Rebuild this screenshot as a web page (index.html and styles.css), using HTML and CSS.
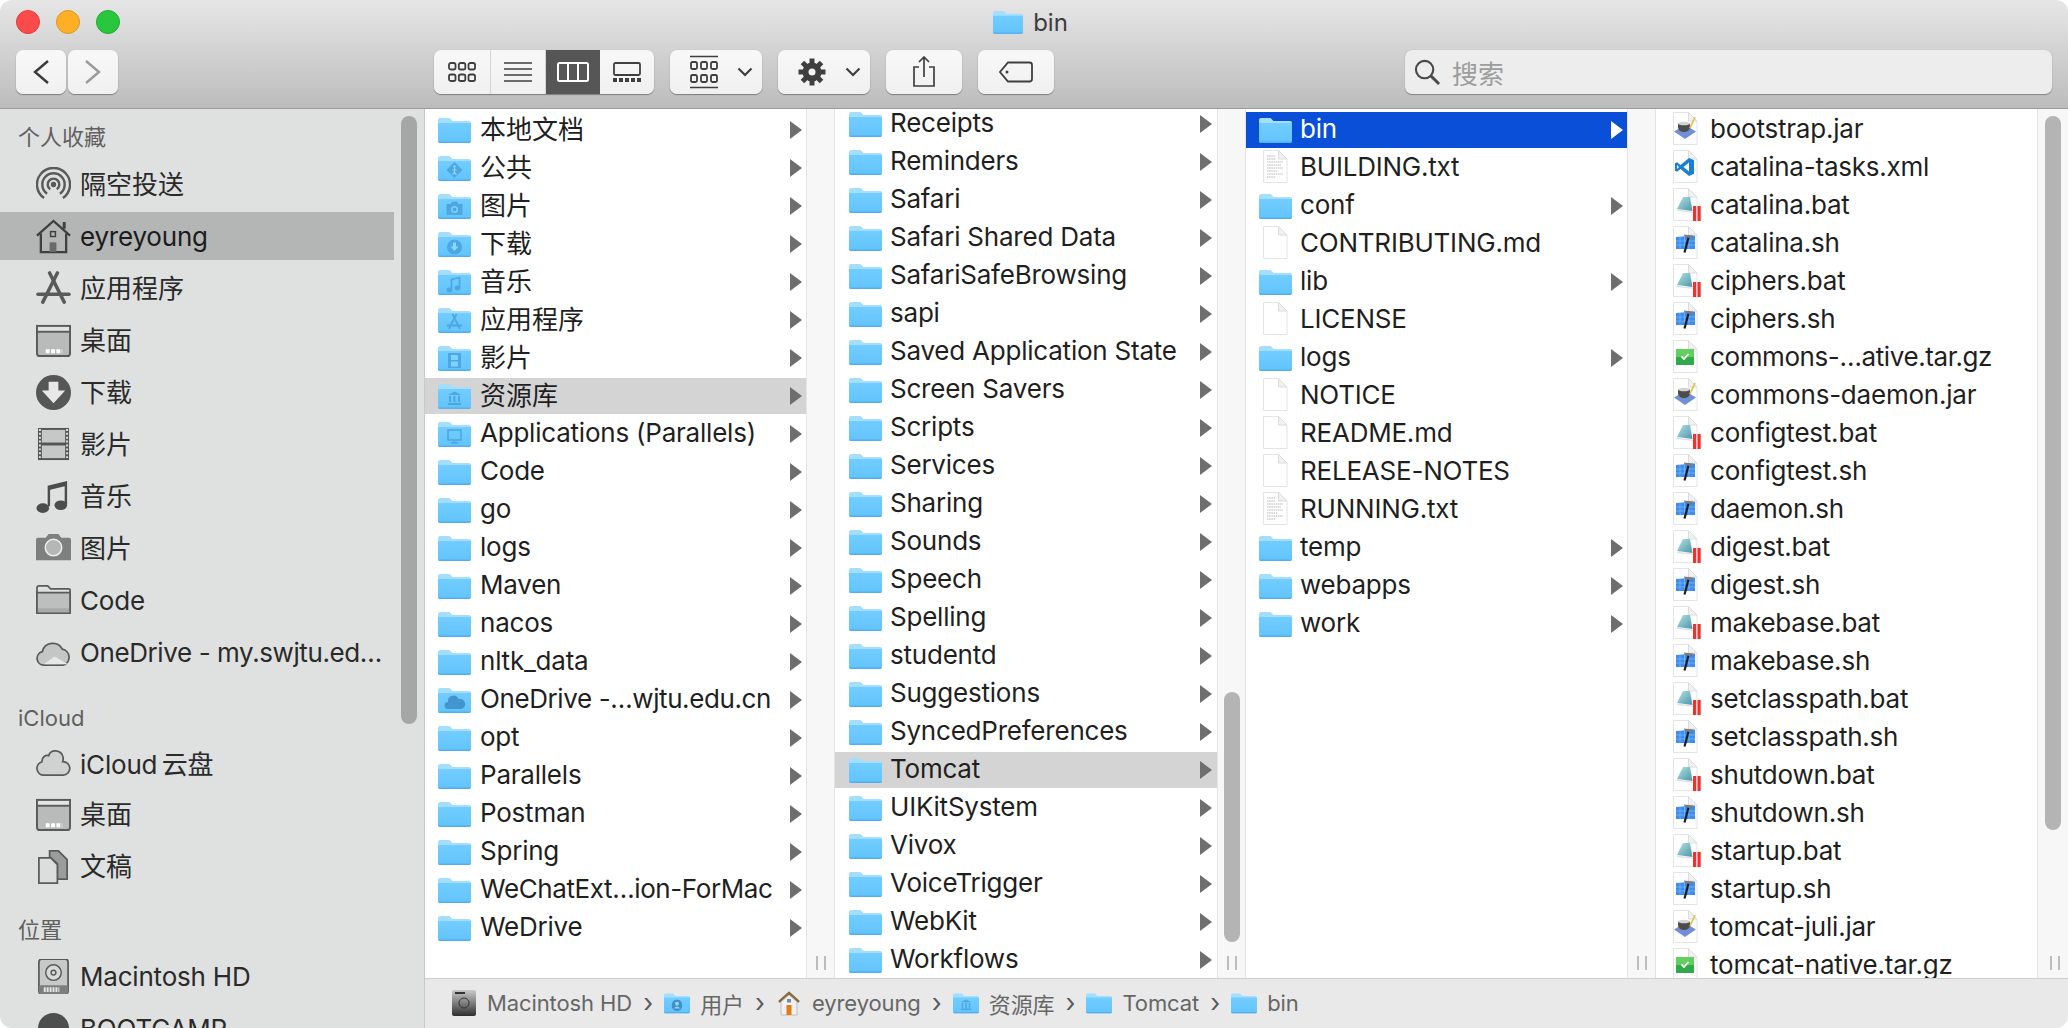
FILE: index.html
```html
<!DOCTYPE html>
<html lang="zh-CN">
<head>
    <meta charset="UTF-8">
    <title>bin</title>
    <link rel="stylesheet" href="styles.css">
</head>
<body>
    <!-- shared icon parts -->
    <svg class="defs" xmlns="http://www.w3.org/2000/svg">
        <defs>
            <linearGradient id="folderFront" x1="0" y1="0" x2="0" y2="1">
                <stop offset="0" stop-color="#72cdff"/>
                <stop offset="1" stop-color="#62c3fc"/>
            </linearGradient>
            <linearGradient id="hdMetal" x1="0" y1="0" x2="0" y2="1">
                <stop offset="0" stop-color="#c9c9c9"/>
                <stop offset="0.6" stop-color="#6f6f6f"/>
                <stop offset="1" stop-color="#2e2e2e"/>
            </linearGradient>
            <linearGradient id="padTeal" x1="0" y1="0" x2="1" y2="1">
                <stop offset="0" stop-color="#b4e2e4"/>
                <stop offset="1" stop-color="#4a96aa"/>
            </linearGradient>
            <g id="folder">
                <path d="M0 3a2 2 0 0 1 2-2h9.500l3 3H31a2 2 0 0 1 2 2v6H0z" fill="#a3deff"/>
                <path d="M0 6h33v18a2 2 0 0 1-2 2H2a2 2 0 0 1-2-2z" fill="url(#folderFront)"/>
                <path d="M0 24.500h33a2 2 0 0 1-2 1.500H2a2 2 0 0 1-2-1.500z" fill="#52afe9"/>
            </g>
            <g id="gPublic" fill="#4ca7e3">
                <path d="M16.500 7l8 8-8 8-8-8z"/>
                <circle cx="16.500" cy="11.500" r="1.200" fill="#8fd6ff"/>
                <path d="M16.500 13v4l-2 3M16.500 17l2 3M14.500 15h4" fill="none" stroke="#8fd6ff" stroke-width="1.200"/>
            </g>
            <g id="gPics" fill="#4ca7e3">
                <path d="M8.500 11h4l1.500-2.500h5L20.500 11h4v11h-16z"/>
                <circle cx="16.500" cy="16.500" r="3.500" fill="#7fd2ff"/>
                <circle cx="16.500" cy="16.500" r="2" fill="#4ca7e3"/>
            </g>
            <g id="gDown">
                <circle cx="16.500" cy="16" r="7.500" fill="#4ca7e3"/>
                <path d="M15 11.500h3v4h2.500l-4 4.500-4-4.500H15z" fill="#8fd6ff"/>
            </g>
            <g id="gMusic" fill="none" stroke="#4ca7e3" stroke-width="1.700">
                <path d="M13.500 21V10.500l8-2V19"/>
                <ellipse cx="11.500" cy="21" rx="2" ry="1.600" fill="#4ca7e3"/>
                <ellipse cx="19.500" cy="19" rx="2" ry="1.600" fill="#4ca7e3"/>
            </g>
            <g id="gApps" fill="none" stroke="#4ca7e3" stroke-width="1.800">
                <path d="M14.500 7l7.500 15M18.500 7L11 22M9 18.500h15"/>
            </g>
            <g id="gMovie" fill="#4ca7e3">
                <path d="M10 8h13v15H10z"/>
                <path d="M13 10h7v5h-7zM13 16.500h7v5h-7z" fill="#7fd2ff"/>
            </g>
            <g id="gLib" fill="#4ca7e3">
                <path d="M16.500 8.500l7 3.500h-14z"/>
                <path d="M11 13h2v6h-2zM15.500 13h2v6h-2zM20 13h2v6h-2zM10 20h13v2H10z"/>
            </g>
            <g id="gParallels" fill="none" stroke="#4ca7e3" stroke-width="1.600">
                <rect x="10" y="9" width="13" height="10"/>
                <path d="M13 22h7M16.500 19v3"/>
            </g>
            <g id="gCloud" fill="#4395cf">
                <path d="M10 22a3.500 3.500 0 0 1 0-7 5.500 5.500 0 0 1 10.500-3 4.500 4.500 0 0 1 3 10z"/>
            </g>
            <g id="gUser" fill="#3f8fc8">
                <rect x="10" y="9" width="13" height="14" rx="6"/>
                <circle cx="16.500" cy="14" r="2.500" fill="#8fd6ff"/>
                <path d="M13 20c.5-3 6.500-3 7 0z" fill="#8fd6ff"/>
            </g>
            <g id="doc">
                <path d="M4.500.5h15l8.500 8.500v23.500H4.500z" fill="#fff" stroke="#e4e4e4"/>
                <path d="M19.500.5V9H28z" fill="#f1f1f1" stroke="#dcdcdc"/>
            </g>
            <g id="docTxt">
                <use href="#doc"/>
                <path d="M8 6h9M8 9h9M8 12h16M8 15h14M8 18h16M8 21h11M8 24h16M8 27h9" stroke="#b4b4b4" stroke-dasharray="1.500 .7"/>
            </g>
            <g id="fJar">
                <use href="#doc"/>
                <path d="M16 13l11 6.500L16 27 5 19.500z" fill="#6f8fd6"/>
                <path d="M9 11h12v4c0 3-3 5-6 5s-6-2-6-5z" fill="#4c4c4c"/>
                <ellipse cx="15" cy="11.500" rx="6" ry="1.800" fill="#d4d4d4"/>
                <path d="M26 5l-5 11" stroke="#e4c24a" stroke-width="1.800"/>
            </g>
            <g id="fXml">
                <use href="#doc"/>
                <path d="M20 8l5 2.300v13.400l-5 2.300-8.500-7-3.500 2.700-2-1v-7.400l2-1 3.500 2.700z" fill="#1b7fd4"/>
                <path d="M20 12.500L14.500 17l5.500 4.500zM8 15v4l2-2z" fill="#fff"/>
            </g>
            <g id="fBat">
                <use href="#doc"/>
                <path d="M8 21.500l15.500 2 .5 1.500-16-2z" fill="#dfe3e4"/>
                <path d="M14 9h7l2.500 14L8 21z" fill="url(#padTeal)"/>
                <path d="M24 18h3.200v15H24zM28.500 18h3.200v15h-3.200z" fill="#f5302c"/>
            </g>
            <g id="fSh">
                <use href="#doc"/>
                <path d="M7 11l19-1.500V23H7z" fill="#3b8df0"/>
                <path d="M11 11v12M15.500 10.500V23M20 10v13M7 15h19M7 19h19" stroke="#8cc0fa" stroke-width=".6"/>
                <path d="M15.500 26.500l4-15" stroke="#1c1c1c" stroke-width="2.200"/>
                <path d="M15 8.500l9 1-.5 3-8-2z" fill="#7c7c7c"/>
            </g>
            <g id="fGz">
                <use href="#doc"/>
                <rect x="7" y="9" width="18" height="8" fill="#62d05f"/>
                <rect x="7" y="17" width="18" height="8" fill="#30a94a"/>
                <path d="M12.500 16.500l2.500 2.500 4.500-5" fill="none" stroke="#fff" stroke-width="1.800"/>
            </g>
        </defs>
    </svg>

    <div class="window">
        <header class="toolbar">
            <div class="title-row">
                <div class="lights">
                    <span class="light red"></span>
                    <span class="light yellow"></span>
                    <span class="light green"></span>
                </div>
                <div class="title">
                    <svg class="title-ico" viewBox="0 0 33 26"><use href="#folder"/></svg>
                    <span>bin</span>
                </div>
            </div>
            <div class="tool-row">
                <div class="nav-buttons">
                    <button class="btn nav-btn"><svg viewBox="0 0 18 28"><path d="M16 3L3 14l13 11" fill="none" stroke="#3a3a3a" stroke-width="2.400"/></svg></button>
                    <button class="btn nav-btn"><svg viewBox="0 0 18 28"><path d="M2 3l13 11L2 25" fill="none" stroke="#9a9a9a" stroke-width="2.400"/></svg></button>
                </div>
                <div class="view-group">
                    <button class="btn view-btn">
                        <svg width="28" height="20" viewBox="0 0 28 20" fill="none" stroke="#3f3f3f" stroke-width="1.800"><rect x="1" y="1" width="6.500" height="6.500" rx="1.800"/><rect x="10.800" y="1" width="6.500" height="6.500" rx="1.800"/><rect x="20.500" y="1" width="6.500" height="6.500" rx="1.800"/><rect x="1" y="12.500" width="6.500" height="6.500" rx="1.800"/><rect x="10.800" y="12.500" width="6.500" height="6.500" rx="1.800"/><rect x="20.500" y="12.500" width="6.500" height="6.500" rx="1.800"/></svg>
                    </button>
                    <button class="btn view-btn">
                        <svg width="28" height="20" viewBox="0 0 28 20" fill="none" stroke="#3f3f3f" stroke-width="1.700"><path d="M0 1h28M0 7h28M0 13h28M0 19h28"/></svg>
                    </button>
                    <button class="btn view-btn on">
                        <svg width="32" height="20" viewBox="0 0 32 20" fill="none" stroke="#fff" stroke-width="2"><rect x="1" y="1" width="30" height="18" rx="1.500"/><path d="M11 1v18M21 1v18"/></svg>
                    </button>
                    <button class="btn view-btn">
                        <svg width="28" height="20" viewBox="0 0 28 20" fill="none" stroke="#3f3f3f" stroke-width="1.800"><rect x="1" y="1" width="26" height="12" rx="1.500"/><path d="M0 18h28" stroke-width="4" stroke-dasharray="4 2"/></svg>
                    </button>
                </div>
                <button class="btn group-btn">
                    <svg class="group-ico" viewBox="0 0 28 34" fill="none" stroke="#3f3f3f" stroke-width="1.800"><path d="M0 1.500h28M0 32.500h28" stroke-width="1.600"/><rect x="1" y="7" width="6" height="7" rx="1.500"/><rect x="11" y="7" width="6" height="7" rx="1.500"/><rect x="21" y="7" width="6" height="7" rx="1.500"/><rect x="1" y="20" width="6" height="7" rx="1.500"/><rect x="11" y="20" width="6" height="7" rx="1.500"/><rect x="21" y="20" width="6" height="7" rx="1.500"/></svg>
                    <svg class="caret" viewBox="0 0 16 10"><path d="M1.500 1.500L8 8l6.500-6.500" fill="none" stroke="#3f3f3f" stroke-width="2.200"/></svg>
                </button>
                <button class="btn gear-btn">
                    <svg class="gear-ico" viewBox="0 0 28 28"><g fill="#3f3f3f"><path fill-rule="evenodd" d="M14 4.500a9.500 9.500 0 1 0 0 19 9.500 9.500 0 0 0 0-19zm0 6a3.500 3.500 0 1 1 0 7 3.500 3.500 0 0 1 0-7z"/><rect x="11.500" y="0.500" width="5" height="6"/><rect x="11.500" y="21.500" width="5" height="6"/><rect x="0.500" y="11.500" width="6" height="5"/><rect x="21.500" y="11.500" width="6" height="5"/><rect x="11.500" y="0.500" width="5" height="6" transform="rotate(45 14 14)"/><rect x="11.500" y="21.500" width="5" height="6" transform="rotate(45 14 14)"/><rect x="0.500" y="11.500" width="6" height="5" transform="rotate(45 14 14)"/><rect x="21.500" y="11.500" width="6" height="5" transform="rotate(45 14 14)"/></g></svg>
                    <svg class="caret" viewBox="0 0 16 10"><path d="M1.500 1.500L8 8l6.500-6.500" fill="none" stroke="#3f3f3f" stroke-width="2.200"/></svg>
                </button>
                <button class="btn share-btn">
                    <svg viewBox="0 0 24 32" fill="none" stroke="#3f3f3f" stroke-width="1.700"><path d="M7 11H2v19h20V11h-5M12 21V1.500M7 6l5-5 5 5"/></svg>
                </button>
                <button class="btn tag-btn">
                    <svg viewBox="0 0 34 22" fill="none" stroke="#3f3f3f" stroke-width="1.800"><path d="M9 1.500h21.500a2.500 2.500 0 0 1 2.500 2.500v14a2.500 2.500 0 0 1-2.500 2.500H9L1 11z"/><circle cx="8" cy="11" r="1.500" fill="#3f3f3f" stroke="none"/></svg>
                </button>
                <div class="search">
                    <svg viewBox="0 0 28 28" fill="none" stroke="#4a4a4a" stroke-width="2.200"><circle cx="11" cy="11" r="9"/><path d="M17.500 17.500L26 26" stroke-width="3"/></svg>
                    <span>搜索</span>
                </div>
            </div>
        </header>

        <div class="content">
            <aside class="sidebar">
                <div class="side-title">个人收藏</div>
                <div class="side-item">
                    <svg class="side-ico" viewBox="0 0 36 36" fill="none" stroke="#5a5a5a" stroke-width="2.500"><path d="M8.300 31.900A17 17 0 1 1 27.700 31.900"/><path d="M11.400 27.400A11.500 11.500 0 1 1 24.600 27.400"/><path d="M14.600 22.900A6 6 0 1 1 21.400 22.900"/><circle cx="18" cy="18" r="1.500" fill="#5a5a5a"/></svg>
                    <span class="cjk">隔空投送</span>
                </div>
                <div class="side-item selected">
                    <svg class="side-ico" viewBox="0 0 36 36" fill="none" stroke="#3f3f3f" stroke-width="2.400"><path d="M1 17L18 2l17 15"/><path d="M29 10V3" stroke-width="3"/><path d="M5 15v19h26V15"/><rect x="15" y="13" width="5" height="5" stroke-width="1.500"/><rect x="14" y="24" width="7" height="10" fill="#6a6a6a" stroke="none"/></svg>
                    <span>eyreyoung</span>
                </div>
                <div class="side-item">
                    <svg class="side-ico" viewBox="0 0 36 36" fill="none" stroke="#5a5a5a" stroke-width="3.600" stroke-linecap="round"><path d="M14 2l15 30"/><path d="M22 2L7 32"/><path d="M2 24h32"/></svg>
                    <span class="cjk">应用程序</span>
                </div>
                <div class="side-item">
                    <svg class="side-ico" viewBox="0 0 36 36"><rect x="1" y="3" width="34" height="31" rx="3" fill="#b9bbba" stroke="#5a5a5a" stroke-width="2"/><rect x="1" y="3" width="34" height="6" fill="#e2e4e3" stroke="#5a5a5a" stroke-width="2"/><path d="M10 29h17" stroke="#fff" stroke-width="4" stroke-dasharray="4 1.500"/></svg>
                    <span class="cjk">桌面</span>
                </div>
                <div class="side-item">
                    <svg class="side-ico" viewBox="0 0 36 36"><circle cx="18" cy="18" r="18" fill="#565656"/><path d="M13 7h10v9h7L18 29 6 16h7z" fill="#e8e8e8"/></svg>
                    <span class="cjk">下载</span>
                </div>
                <div class="side-item">
                    <svg class="side-ico" viewBox="0 0 36 36"><rect x="2" y="1" width="32" height="33" fill="#555"/><rect x="6" y="3" width="24" height="13" fill="#c6c8c7"/><rect x="6" y="19" width="24" height="13" fill="#c6c8c7"/><path d="M4 2v32M32 2v32" stroke="#e2e2e2" stroke-width="2" stroke-dasharray="2 2"/></svg>
                    <span class="cjk">影片</span>
                </div>
                <div class="side-item">
                    <svg class="side-ico" viewBox="0 0 36 36"><path d="M12 28V7l20-5v24h-2.500V7.500L14.500 11v17z" fill="#4c4c4c"/><ellipse cx="7" cy="30" rx="6.500" ry="5" fill="#4c4c4c"/><ellipse cx="25.500" cy="27" rx="6.500" ry="5" fill="#4c4c4c"/></svg>
                    <span class="cjk">音乐</span>
                </div>
                <div class="side-item">
                    <svg class="side-ico" viewBox="0 0 36 36"><path d="M2 7h8l3-4h10l3 4h8a2 2 0 0 1 2 2v21H0V9a2 2 0 0 1 2-2z" fill="#7e807f"/><circle cx="18" cy="17" r="8.500" fill="#b5b7b6" stroke="#eee" stroke-width="1.500"/></svg>
                    <span class="cjk">图片</span>
                </div>
                <div class="side-item">
                    <svg class="side-ico" viewBox="0 0 36 36"><path d="M1 30V5a2 2 0 0 1 2-2h9l3 3h19a1 1 0 0 1 1 1v23z" fill="#dfe1e0" stroke="#5a5a5a" stroke-width="1.800"/><path d="M1 10h34v21H1z" fill="#bdbfbe" stroke="#5a5a5a" stroke-width="1.800"/><path d="M2 26h32v4H2z" fill="#a8aaa9"/></svg>
                    <span>Code</span>
                </div>
                <div class="side-item">
                    <svg class="side-ico" viewBox="0 0 36 36"><path d="M8 31a7 7 0 0 1-1.500-13.800A11 11 0 0 1 27 14.500a8.500 8.500 0 0 1 1 16.500z" fill="#c4c6c5" stroke="#5a5a5a" stroke-width="1.800"/><path d="M8 30l11-8 14 8z" fill="#e6e8e7"/></svg>
                    <span class="tight">OneDrive - my.swjtu.ed…</span>
                </div>

                <div class="side-title spaced">iCloud</div>
                <div class="side-item">
                    <svg class="side-ico" viewBox="0 0 36 36"><path d="M8 31a7 7 0 0 1-2-13.700C6 12 10 10 13 11c2-7 13-7 15 2 0 2 0 3-.5 4A7 7 0 0 1 28 31z" fill="#d0d2d1" stroke="#5a5a5a" stroke-width="1.800"/></svg>
                    <span>iCloud&#8201;云盘</span>
                </div>
                <div class="side-item">
                    <svg class="side-ico" viewBox="0 0 36 36"><rect x="1" y="3" width="34" height="31" rx="3" fill="#b9bbba" stroke="#5a5a5a" stroke-width="2"/><rect x="1" y="3" width="34" height="6" fill="#e2e4e3" stroke="#5a5a5a" stroke-width="2"/><path d="M10 29h17" stroke="#fff" stroke-width="4" stroke-dasharray="4 1.500"/></svg>
                    <span class="cjk">桌面</span>
                </div>
                <div class="side-item">
                    <svg class="side-ico" viewBox="0 0 36 36"><path d="M14 2h9l9 9v20H22V15l-8-7z" fill="#9b9d9c" stroke="#5a5a5a" stroke-width="1.800"/><path d="M3 9h12l7 7v19H3z" fill="#dcdedd" stroke="#5a5a5a" stroke-width="1.800"/></svg>
                    <span class="cjk">文稿</span>
                </div>

                <div class="side-title places">位置</div>
                <div class="side-item">
                    <svg class="side-ico" viewBox="0 0 36 36"><rect x="3" y="0" width="30" height="36" rx="3" fill="#c7c9c8" stroke="#5a5a5a" stroke-width="1.800"/><circle cx="18" cy="14" r="8" fill="#d8dad9" stroke="#5a5a5a" stroke-width="1.500"/><circle cx="18" cy="14" r="2.500" fill="none" stroke="#5a5a5a" stroke-width="1.500"/><rect x="3" y="27" width="30" height="9" rx="2" fill="#7d7f7e"/><path d="M8 31.500h16" stroke="#e6e6e6" stroke-width="5" stroke-dasharray="2 1"/></svg>
                    <span>Macintosh HD</span>
                </div>
                <div class="side-item">
                    <svg class="side-ico" viewBox="0 0 36 36"><circle cx="18" cy="18" r="16" fill="#4e4e4e"/></svg>
                    <span>BOOTCAMP</span>
                </div>
                <div class="side-scroll"></div>
            </aside>

            <div class="browser">
                <div class="columns">
                    <div class="col col-one">
                        <div class="row"><svg class="ico" viewBox="0 0 33 26"><use href="#folder"/></svg><span class="cjk">本地文档</span><i class="arrow"></i></div>
                        <div class="row"><svg class="ico" viewBox="0 0 33 26"><use href="#folder"/><use href="#gPublic"/></svg><span class="cjk">公共</span><i class="arrow"></i></div>
                        <div class="row"><svg class="ico" viewBox="0 0 33 26"><use href="#folder"/><use href="#gPics"/></svg><span class="cjk">图片</span><i class="arrow"></i></div>
                        <div class="row"><svg class="ico" viewBox="0 0 33 26"><use href="#folder"/><use href="#gDown"/></svg><span class="cjk">下载</span><i class="arrow"></i></div>
                        <div class="row"><svg class="ico" viewBox="0 0 33 26"><use href="#folder"/><use href="#gMusic"/></svg><span class="cjk">音乐</span><i class="arrow"></i></div>
                        <div class="row"><svg class="ico" viewBox="0 0 33 26"><use href="#folder"/><use href="#gApps"/></svg><span class="cjk">应用程序</span><i class="arrow"></i></div>
                        <div class="row"><svg class="ico" viewBox="0 0 33 26"><use href="#folder"/><use href="#gMovie"/></svg><span class="cjk">影片</span><i class="arrow"></i></div>
                        <div class="row grey"><svg class="ico" viewBox="0 0 33 26"><use href="#folder"/><use href="#gLib"/></svg><span class="cjk">资源库</span><i class="arrow"></i></div>
                        <div class="row"><svg class="ico" viewBox="0 0 33 26"><use href="#folder"/><use href="#gParallels"/></svg><span>Applications (Parallels)</span><i class="arrow"></i></div>
                        <div class="row"><svg class="ico" viewBox="0 0 33 26"><use href="#folder"/></svg><span>Code</span><i class="arrow"></i></div>
                        <div class="row"><svg class="ico" viewBox="0 0 33 26"><use href="#folder"/></svg><span>go</span><i class="arrow"></i></div>
                        <div class="row"><svg class="ico" viewBox="0 0 33 26"><use href="#folder"/></svg><span>logs</span><i class="arrow"></i></div>
                        <div class="row"><svg class="ico" viewBox="0 0 33 26"><use href="#folder"/></svg><span>Maven</span><i class="arrow"></i></div>
                        <div class="row"><svg class="ico" viewBox="0 0 33 26"><use href="#folder"/></svg><span>nacos</span><i class="arrow"></i></div>
                        <div class="row"><svg class="ico" viewBox="0 0 33 26"><use href="#folder"/></svg><span>nltk_data</span><i class="arrow"></i></div>
                        <div class="row"><svg class="ico" viewBox="0 0 33 26"><use href="#folder"/><use href="#gCloud"/></svg><span class="tight">OneDrive -…wjtu.edu.cn</span><i class="arrow"></i></div>
                        <div class="row"><svg class="ico" viewBox="0 0 33 26"><use href="#folder"/></svg><span>opt</span><i class="arrow"></i></div>
                        <div class="row"><svg class="ico" viewBox="0 0 33 26"><use href="#folder"/></svg><span>Parallels</span><i class="arrow"></i></div>
                        <div class="row"><svg class="ico" viewBox="0 0 33 26"><use href="#folder"/></svg><span>Postman</span><i class="arrow"></i></div>
                        <div class="row"><svg class="ico" viewBox="0 0 33 26"><use href="#folder"/></svg><span>Spring</span><i class="arrow"></i></div>
                        <div class="row"><svg class="ico" viewBox="0 0 33 26"><use href="#folder"/></svg><span class="tight">WeChatExt…ion-ForMac</span><i class="arrow"></i></div>
                        <div class="row"><svg class="ico" viewBox="0 0 33 26"><use href="#folder"/></svg><span>WeDrive</span><i class="arrow"></i></div>
                    </div>
                    <div class="strip"><div class="handle"></div></div>

                    <div class="col col-two">
                        <div class="row"><svg class="ico" viewBox="0 0 33 26"><use href="#folder"/></svg><span>Receipts</span><i class="arrow"></i></div>
                        <div class="row"><svg class="ico" viewBox="0 0 33 26"><use href="#folder"/></svg><span>Reminders</span><i class="arrow"></i></div>
                        <div class="row"><svg class="ico" viewBox="0 0 33 26"><use href="#folder"/></svg><span>Safari</span><i class="arrow"></i></div>
                        <div class="row"><svg class="ico" viewBox="0 0 33 26"><use href="#folder"/></svg><span>Safari Shared Data</span><i class="arrow"></i></div>
                        <div class="row"><svg class="ico" viewBox="0 0 33 26"><use href="#folder"/></svg><span>SafariSafeBrowsing</span><i class="arrow"></i></div>
                        <div class="row"><svg class="ico" viewBox="0 0 33 26"><use href="#folder"/></svg><span>sapi</span><i class="arrow"></i></div>
                        <div class="row"><svg class="ico" viewBox="0 0 33 26"><use href="#folder"/></svg><span>Saved Application State</span><i class="arrow"></i></div>
                        <div class="row"><svg class="ico" viewBox="0 0 33 26"><use href="#folder"/></svg><span>Screen Savers</span><i class="arrow"></i></div>
                        <div class="row"><svg class="ico" viewBox="0 0 33 26"><use href="#folder"/></svg><span>Scripts</span><i class="arrow"></i></div>
                        <div class="row"><svg class="ico" viewBox="0 0 33 26"><use href="#folder"/></svg><span>Services</span><i class="arrow"></i></div>
                        <div class="row"><svg class="ico" viewBox="0 0 33 26"><use href="#folder"/></svg><span>Sharing</span><i class="arrow"></i></div>
                        <div class="row"><svg class="ico" viewBox="0 0 33 26"><use href="#folder"/></svg><span>Sounds</span><i class="arrow"></i></div>
                        <div class="row"><svg class="ico" viewBox="0 0 33 26"><use href="#folder"/></svg><span>Speech</span><i class="arrow"></i></div>
                        <div class="row"><svg class="ico" viewBox="0 0 33 26"><use href="#folder"/></svg><span>Spelling</span><i class="arrow"></i></div>
                        <div class="row"><svg class="ico" viewBox="0 0 33 26"><use href="#folder"/></svg><span>studentd</span><i class="arrow"></i></div>
                        <div class="row"><svg class="ico" viewBox="0 0 33 26"><use href="#folder"/></svg><span>Suggestions</span><i class="arrow"></i></div>
                        <div class="row"><svg class="ico" viewBox="0 0 33 26"><use href="#folder"/></svg><span>SyncedPreferences</span><i class="arrow"></i></div>
                        <div class="row grey"><svg class="ico" viewBox="0 0 33 26"><use href="#folder"/></svg><span>Tomcat</span><i class="arrow"></i></div>
                        <div class="row"><svg class="ico" viewBox="0 0 33 26"><use href="#folder"/></svg><span>UIKitSystem</span><i class="arrow"></i></div>
                        <div class="row"><svg class="ico" viewBox="0 0 33 26"><use href="#folder"/></svg><span>Vivox</span><i class="arrow"></i></div>
                        <div class="row"><svg class="ico" viewBox="0 0 33 26"><use href="#folder"/></svg><span>VoiceTrigger</span><i class="arrow"></i></div>
                        <div class="row"><svg class="ico" viewBox="0 0 33 26"><use href="#folder"/></svg><span>WebKit</span><i class="arrow"></i></div>
                        <div class="row"><svg class="ico" viewBox="0 0 33 26"><use href="#folder"/></svg><span>Workflows</span><i class="arrow"></i></div>
                    </div>
                    <div class="strip"><div class="col-scroll scroll-two"></div><div class="handle"></div></div>

                    <div class="col col-three">
                        <div class="row active"><svg class="ico" viewBox="0 0 33 26"><use href="#folder"/></svg><span>bin</span><i class="arrow"></i></div>
                        <div class="row"><svg class="ico doc" viewBox="0 0 33 33"><use href="#docTxt"/></svg><span>BUILDING.txt</span></div>
                        <div class="row"><svg class="ico" viewBox="0 0 33 26"><use href="#folder"/></svg><span>conf</span><i class="arrow"></i></div>
                        <div class="row"><svg class="ico doc" viewBox="0 0 33 33"><use href="#doc"/></svg><span>CONTRIBUTING.md</span></div>
                        <div class="row"><svg class="ico" viewBox="0 0 33 26"><use href="#folder"/></svg><span>lib</span><i class="arrow"></i></div>
                        <div class="row"><svg class="ico doc" viewBox="0 0 33 33"><use href="#doc"/></svg><span>LICENSE</span></div>
                        <div class="row"><svg class="ico" viewBox="0 0 33 26"><use href="#folder"/></svg><span>logs</span><i class="arrow"></i></div>
                        <div class="row"><svg class="ico doc" viewBox="0 0 33 33"><use href="#doc"/></svg><span>NOTICE</span></div>
                        <div class="row"><svg class="ico doc" viewBox="0 0 33 33"><use href="#doc"/></svg><span>README.md</span></div>
                        <div class="row"><svg class="ico doc" viewBox="0 0 33 33"><use href="#doc"/></svg><span>RELEASE-NOTES</span></div>
                        <div class="row"><svg class="ico doc" viewBox="0 0 33 33"><use href="#docTxt"/></svg><span>RUNNING.txt</span></div>
                        <div class="row"><svg class="ico" viewBox="0 0 33 26"><use href="#folder"/></svg><span>temp</span><i class="arrow"></i></div>
                        <div class="row"><svg class="ico" viewBox="0 0 33 26"><use href="#folder"/></svg><span>webapps</span><i class="arrow"></i></div>
                        <div class="row"><svg class="ico" viewBox="0 0 33 26"><use href="#folder"/></svg><span>work</span><i class="arrow"></i></div>
                    </div>
                    <div class="strip"><div class="handle"></div></div>

                    <div class="col col-four">
                        <div class="row"><svg class="ico doc" viewBox="0 0 33 33"><use href="#fJar"/></svg><span>bootstrap.jar</span></div>
                        <div class="row"><svg class="ico doc" viewBox="0 0 33 33"><use href="#fXml"/></svg><span>catalina-tasks.xml</span></div>
                        <div class="row"><svg class="ico doc" viewBox="0 0 33 33"><use href="#fBat"/></svg><span>catalina.bat</span></div>
                        <div class="row"><svg class="ico doc" viewBox="0 0 33 33"><use href="#fSh"/></svg><span>catalina.sh</span></div>
                        <div class="row"><svg class="ico doc" viewBox="0 0 33 33"><use href="#fBat"/></svg><span>ciphers.bat</span></div>
                        <div class="row"><svg class="ico doc" viewBox="0 0 33 33"><use href="#fSh"/></svg><span>ciphers.sh</span></div>
                        <div class="row"><svg class="ico doc" viewBox="0 0 33 33"><use href="#fGz"/></svg><span class="tight">commons-…ative.tar.gz</span></div>
                        <div class="row"><svg class="ico doc" viewBox="0 0 33 33"><use href="#fJar"/></svg><span>commons-daemon.jar</span></div>
                        <div class="row"><svg class="ico doc" viewBox="0 0 33 33"><use href="#fBat"/></svg><span>configtest.bat</span></div>
                        <div class="row"><svg class="ico doc" viewBox="0 0 33 33"><use href="#fSh"/></svg><span>configtest.sh</span></div>
                        <div class="row"><svg class="ico doc" viewBox="0 0 33 33"><use href="#fSh"/></svg><span>daemon.sh</span></div>
                        <div class="row"><svg class="ico doc" viewBox="0 0 33 33"><use href="#fBat"/></svg><span>digest.bat</span></div>
                        <div class="row"><svg class="ico doc" viewBox="0 0 33 33"><use href="#fSh"/></svg><span>digest.sh</span></div>
                        <div class="row"><svg class="ico doc" viewBox="0 0 33 33"><use href="#fBat"/></svg><span>makebase.bat</span></div>
                        <div class="row"><svg class="ico doc" viewBox="0 0 33 33"><use href="#fSh"/></svg><span>makebase.sh</span></div>
                        <div class="row"><svg class="ico doc" viewBox="0 0 33 33"><use href="#fBat"/></svg><span>setclasspath.bat</span></div>
                        <div class="row"><svg class="ico doc" viewBox="0 0 33 33"><use href="#fSh"/></svg><span>setclasspath.sh</span></div>
                        <div class="row"><svg class="ico doc" viewBox="0 0 33 33"><use href="#fBat"/></svg><span>shutdown.bat</span></div>
                        <div class="row"><svg class="ico doc" viewBox="0 0 33 33"><use href="#fSh"/></svg><span>shutdown.sh</span></div>
                        <div class="row"><svg class="ico doc" viewBox="0 0 33 33"><use href="#fBat"/></svg><span>startup.bat</span></div>
                        <div class="row"><svg class="ico doc" viewBox="0 0 33 33"><use href="#fSh"/></svg><span>startup.sh</span></div>
                        <div class="row"><svg class="ico doc" viewBox="0 0 33 33"><use href="#fJar"/></svg><span>tomcat-juli.jar</span></div>
                        <div class="row"><svg class="ico doc" viewBox="0 0 33 33"><use href="#fGz"/></svg><span>tomcat-native.tar.gz</span></div>
                    </div>
                    <div class="strip last"><div class="col-scroll scroll-four"></div><div class="handle"></div></div>
                </div>

                <footer class="pathbar">
                    <svg class="path-hd" viewBox="0 0 26 26"><rect x="1" y="0" width="24" height="26" rx="2" fill="url(#hdMetal)"/><circle cx="13" cy="13" r="5" fill="none" stroke="#333"/><rect x="4" y="2" width="10" height="2" fill="#333"/></svg>
                    <span class="crumb">Macintosh HD</span><i class="sep">›</i>
                    <svg class="path-ico" viewBox="0 0 33 26"><use href="#folder"/><use href="#gUser"/></svg>
                    <span class="crumb">用户</span><i class="sep">›</i>
                    <svg class="path-ico" viewBox="0 0 26 26"><path d="M3 12L13 3l10 9" fill="none" stroke="#8a6a3a" stroke-width="2.600"/><path d="M5 12l8-7 8 7v13H5z" fill="#f1f1f1" stroke="#bdbdbd"/><rect x="10.500" y="15" width="5" height="10" fill="#e37b12"/><rect x="11" y="9" width="4" height="3.500" fill="#6f8aa8"/></svg>
                    <span class="crumb">eyreyoung</span><i class="sep">›</i>
                    <svg class="path-ico" viewBox="0 0 33 26"><use href="#folder"/><use href="#gLib"/></svg>
                    <span class="crumb">资源库</span><i class="sep">›</i>
                    <svg class="path-ico" viewBox="0 0 33 26"><use href="#folder"/></svg>
                    <span class="crumb">Tomcat</span><i class="sep">›</i>
                    <svg class="path-ico" viewBox="0 0 33 26"><use href="#folder"/></svg>
                    <span class="crumb">bin</span>
                </footer>
            </div>
        </div>
    </div>
</body>
</html>
```

FILE: styles.css
```css
* {
    margin: 0;
    padding: 0;
    box-sizing: border-box;
    font-family: 'Inter', 'Noto Sans CJK SC', sans-serif;
}

body {
    background: #fff;
    color: #1f1f1f;
    width: 2068px;
    height: 1028px;
    overflow: hidden;
}

.defs {
    position: absolute;
    width: 0;
    height: 0;
}

.window {
    display: flex;
    flex-direction: column;
    height: 1028px;
    overflow: hidden;
    border-radius: 12px;
}

/* toolbar */
.toolbar {
    height: 109px;
    flex: none;
    background: linear-gradient(#e6e6e6, #bcbcbc);
    border-bottom: 1px solid #9c9c9c;
}

.title-row {
    display: grid;
    grid-template-columns: 1fr auto 1fr;
    align-items: center;
    height: 44px;
}

.lights {
    display: flex;
    gap: 16px;
    padding-left: 16px;
}

.light {
    width: 24px;
    height: 24px;
    border-radius: 50%;
}

.red { background: #fc4b4a; border: 1px solid #de3d3c; }
.yellow { background: #fdb024; border: 1px solid #dd9720; }
.green { background: #28c73c; border: 1px solid #20ab30; }

.title {
    display: flex;
    align-items: center;
    gap: 10px;
    margin-right: 7px;
    font-size: 24px;
    color: #3c3c3c;
}

.title-ico {
    width: 30px;
    height: 24px;
}

.tool-row {
    display: flex;
    padding: 6px 16px 0;
}

.btn {
    display: flex;
    align-items: center;
    justify-content: center;
    height: 44px;
    border: none;
    border-radius: 7px;
    background: linear-gradient(#f8f8f8, #f0f0f0);
    box-shadow: 0 1px 1px rgba(0, 0, 0, 0.35), 0 0 1px rgba(0, 0, 0, 0.2);
}

.nav-buttons {
    display: flex;
    gap: 2px;
    margin-right: 316px;
}

.nav-btn {
    width: 50px;
}

.nav-btn svg {
    width: 18px;
    height: 28px;
}

.view-group {
    display: flex;
    width: 220px;
    height: 44px;
    border-radius: 7px;
    overflow: hidden;
    box-shadow: 0 1px 1px rgba(0, 0, 0, 0.35), 0 0 1px rgba(0, 0, 0, 0.2);
    margin-right: 16px;
}

.view-btn {
    flex: 1;
    border-radius: 0;
    box-shadow: none;
    border-right: 1px solid #d4d4d4;
}

.view-btn:first-child {
    flex: none;
    width: 57px;
}

.view-btn:last-child {
    border-right: none;
}

.view-btn.on {
    background: #565656;
    border-right: none;
}

.group-btn, .gear-btn {
    justify-content: flex-start;
    gap: 19px;
    width: 92px;
    margin-right: 16px;
    padding-left: 20px;
}

.group-ico {
    width: 28px;
    height: 34px;
}

.gear-ico {
    width: 28px;
    height: 28px;
}

.caret {
    width: 16px;
    height: 10px;
}

.share-btn, .tag-btn {
    width: 76px;
    margin-right: 16px;
}

.share-btn svg {
    width: 24px;
    height: 32px;
}

.tag-btn svg {
    width: 34px;
    height: 22px;
}

.search {
    display: flex;
    align-items: center;
    gap: 11px;
    width: 647px;
    height: 44px;
    margin-left: auto;
    padding-left: 9px;
    border-radius: 7px;
    background: #ededed;
    box-shadow: 0 1px 1px rgba(0, 0, 0, 0.3), 0 0 1px rgba(0, 0, 0, 0.2);
    font-size: 26px;
    color: #9c9c9c;
}

.search svg {
    width: 27px;
    height: 27px;
}

/* main area */
.content {
    display: flex;
    flex: 1;
    min-height: 0;
}

.sidebar {
    position: relative;
    width: 425px;
    flex: none;
    padding-top: 12px;
    background: #dfe1e0;
    border-right: 1px solid #c9c9c9;
    overflow: hidden;
}

.side-title {
    height: 32px;
    margin-bottom: 7px;
    padding-left: 18px;
    font-size: 22px;
    line-height: 32px;
    color: #5f5f5f;
}

.side-title.spaced {
    margin-top: 26px;
    margin-bottom: 4px;
}

.side-title.places {
    margin-top: 24px;
    margin-bottom: 6px;
}

.side-item {
    display: flex;
    align-items: center;
    gap: 9px;
    width: 394px;
    height: 48px;
    margin-bottom: 4px;
    padding-left: 36px;
    font-size: 26px;
    letter-spacing: -0.2px;
    color: #2a2a2a;
    white-space: nowrap;
}

.side-item .cjk {
    position: relative;
    top: -2px;
    letter-spacing: 0;
}

.side-item .tight {
    letter-spacing: -0.4px;
}

.side-item.selected {
    background: #b4b6b5;
    color: #1c1c1c;
}

.side-ico {
    width: 35px;
    height: 35px;
    flex: none;
}

.side-scroll {
    position: absolute;
    top: 7px;
    right: 7px;
    width: 16px;
    height: 608px;
    border-radius: 8px;
    background: #a5a7a6;
}

.browser {
    display: flex;
    flex-direction: column;
    flex: 1;
    min-width: 0;
}

.columns {
    display: flex;
    flex: 1;
    min-height: 0;
}

.col {
    flex: none;
    overflow: hidden;
    padding-top: 3px;
    background: #fff;
}

.col-one { width: 381px; }
.col-two { width: 382px; padding-top: 0; }
.col-three { width: 381px; }
.col-four { width: 381px; }

.col-two .row:first-child {
    margin-top: -3px;
}

.strip {
    position: relative;
    flex: none;
    width: 29px;
    background: #f7f7f7;
    border-left: 1px solid #e4e4e4;
    border-right: 1px solid #e4e4e4;
}

.strip.last {
    flex: 1;
    border-right: none;
}

.handle {
    position: absolute;
    left: 9px;
    bottom: 8px;
    width: 10px;
    height: 14px;
    border-left: 2px solid #bdbdbd;
    border-right: 2px solid #bdbdbd;
}

.strip.last .handle {
    left: 12px;
}

.col-scroll {
    position: absolute;
    width: 16px;
    border-radius: 8px;
    background: #b4b4b4;
}

.scroll-two {
    top: 583px;
    left: 6px;
    height: 250px;
}

.scroll-four {
    top: 7px;
    left: 7px;
    height: 714px;
}

.row {
    display: flex;
    align-items: center;
    gap: 8px;
    height: 36px;
    margin-bottom: 2px;
    padding: 0 4px 0 13px;
    font-size: 26px;
    letter-spacing: -0.22px;
    white-space: nowrap;
}

.col-one .row {
    gap: 9px;
}

.row span {
    position: relative;
    top: -2px;
}

.row .cjk {
    top: -3px;
    letter-spacing: 0;
}

.row .tight {
    letter-spacing: -0.4px;
}

.ico {
    width: 33px;
    height: 26px;
    flex: none;
}

.ico.doc {
    height: 33px;
    margin-top: -3px;
    overflow: visible;
}

.arrow {
    width: 0;
    height: 0;
    margin-left: auto;
    border-left: 12px solid #6e6e6e;
    border-top: 9px solid transparent;
    border-bottom: 9px solid transparent;
}

.row.grey {
    background: #d4d4d4;
}

.row.active {
    background: #0a4fd8;
    color: #fff;
}

.row.active .arrow {
    border-left-color: #fff;
}

.col-two .row {
    padding-left: 14px;
    padding-right: 5px;
}

/* path bar */
.pathbar {
    display: flex;
    align-items: center;
    flex: none;
    height: 50px;
    padding: 0 0 2px 26px;
    background: #e9e9e9;
    border-top: 1px solid #cfcfcf;
    font-size: 22px;
    letter-spacing: -0.1px;
    color: #666;
}

.path-hd {
    width: 26px;
    height: 26px;
    margin-right: 10px;
}

.path-ico {
    width: 26px;
    height: 26px;
    margin-right: 10px;
}

.crumb {
    white-space: nowrap;
}

.sep {
    width: 32px;
    text-align: center;
    font-style: normal;
    font-size: 26px;
    color: #5a5a5a;
}
```
